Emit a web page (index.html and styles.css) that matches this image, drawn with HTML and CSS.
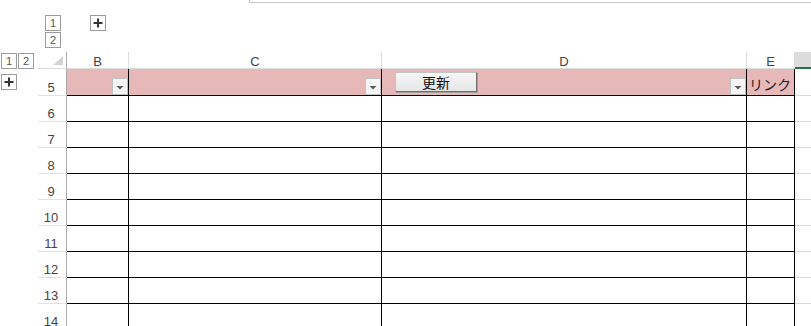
FILE: index.html
```html
<!DOCTYPE html>
<html lang="ja">
<head>
<meta charset="utf-8">
<link rel="stylesheet" href="styles.css">
</head>
<body>
<div class="formula-edge"></div>
<div class="sheet">
  <!-- outline level area -->
  <div class="blank"></div>
  <div class="col-levels"><span class="lvl">1</span><span class="lvl">2</span></div>
  <div class="col-plus"><span class="lvl"><svg width="14" height="14" viewBox="0 0 14 14"><path d="M7 2.5v9M2.5 7h9" stroke="#333" stroke-width="2"/></svg></span></div>
  <div class="top-rest"></div>

  <!-- column headers -->
  <div class="row-levels"><span class="lvl">1</span><span class="lvl">2</span></div>
  <div class="corner"><svg width="10" height="9" viewBox="0 0 10 9"><polygon points="10,0 10,9 0,9" fill="#d4d4d4"/></svg></div>
  <div class="colhead">B</div>
  <div class="colhead">C</div>
  <div class="colhead">D</div>
  <div class="colhead">E</div>
  <div class="colhead sel"></div>

  <!-- row 5 -->
  <div class="row-plus"><span class="lvl"><svg width="14" height="14" viewBox="0 0 14 14"><path d="M7 2.5v9M2.5 7h9" stroke="#333" stroke-width="2"/></svg></span></div>
  <div class="rowhead">5</div>
  <div class="cell hdr filt"><span class="dd"><svg width="14" height="15" viewBox="0 0 14 15"><polygon points="3.5,7 10.5,7 7,10.5" fill="#5a5a5a"/></svg></span></div>
  <div class="cell hdr filt"><span class="dd"><svg width="14" height="15" viewBox="0 0 14 15"><polygon points="3.5,7 10.5,7 7,10.5" fill="#5a5a5a"/></svg></span></div>
  <div class="cell hdr filt split"><button class="btn">更新</button><span class="dd"><svg width="14" height="15" viewBox="0 0 14 15"><polygon points="3.5,7 10.5,7 7,10.5" fill="#5a5a5a"/></svg></span></div>
  <div class="cell hdr txt">リンク</div>
  <div class="out"></div>

  <div class="blank"></div><div class="rowhead">6</div><div class="cell"></div><div class="cell"></div><div class="cell"></div><div class="cell"></div><div class="out"></div>
  <div class="blank"></div><div class="rowhead">7</div><div class="cell"></div><div class="cell"></div><div class="cell"></div><div class="cell"></div><div class="out"></div>
  <div class="blank"></div><div class="rowhead">8</div><div class="cell"></div><div class="cell"></div><div class="cell"></div><div class="cell"></div><div class="out"></div>
  <div class="blank"></div><div class="rowhead">9</div><div class="cell"></div><div class="cell"></div><div class="cell"></div><div class="cell"></div><div class="out"></div>
  <div class="blank"></div><div class="rowhead">10</div><div class="cell"></div><div class="cell"></div><div class="cell"></div><div class="cell"></div><div class="out"></div>
  <div class="blank"></div><div class="rowhead">11</div><div class="cell"></div><div class="cell"></div><div class="cell"></div><div class="cell"></div><div class="out"></div>
  <div class="blank"></div><div class="rowhead">12</div><div class="cell"></div><div class="cell"></div><div class="cell"></div><div class="cell"></div><div class="out"></div>
  <div class="blank"></div><div class="rowhead">13</div><div class="cell"></div><div class="cell"></div><div class="cell"></div><div class="cell"></div><div class="out"></div>
  <div class="blank"></div><div class="rowhead">14</div><div class="cell"></div><div class="cell"></div><div class="cell"></div><div class="cell"></div><div class="out"></div>
</div>
</body>
</html>
```

FILE: styles.css
```css
html, body {
  margin: 0;
  padding: 0;
  background: #ffffff;
  overflow: hidden;
  height: 326px;
}

body {
  font-family: "Liberation Sans", "Noto Sans CJK JP", sans-serif;
  color: #444444;
}

.formula-edge {
  margin-left: 249px;
  height: 2px;
  border-left: 1px solid #c8c8c8;
  border-bottom: 1px solid #c8c8c8;
}

.sheet {
  display: grid;
  grid-template-columns: 38px 29px 62px 253px 365px 48px 1fr;
  grid-template-rows: 49px 17px 27px repeat(9, 26px);
}

.lvl {
  box-sizing: border-box;
  width: 16px;
  height: 16px;
  border: 1px solid #9c9c9c;
  background: #ffffff;
  font-size: 11px;
  line-height: 14px;
  color: #555555;
  display: flex;
  align-items: center;
  justify-content: center;
}

.col-levels {
  display: flex;
  flex-direction: column;
  gap: 1px;
  padding: 12px 0 0 7px;
}

.col-plus {
  padding: 12px 0 0 23px;
}

.top-rest {
  grid-column: 4 / 8;
}

.row-levels {
  display: flex;
  gap: 1px;
  padding: 1px 0 0 1px;
}

.row-plus {
  padding: 5px 0 0 1px;
}

.corner {
  box-sizing: border-box;
  border-right: 1px solid #ababab;
  border-bottom: 1px solid #dcdcdc;
  display: flex;
  align-items: flex-end;
  justify-content: flex-end;
  padding: 0 3px 3px 0;
}

.colhead {
  box-sizing: border-box;
  border-right: 1px solid #dcdcdc;
  border-bottom: 1px solid #dcdcdc;
  font-size: 13px;
  line-height: 14px;
  text-align: center;
  padding-top: 3px;
}

.colhead.sel {
  background: #dcdcdc;
  border-right: 0;
  border-bottom: 2px solid #217346;
}

.rowhead {
  box-sizing: border-box;
  border-right: 1px solid #ababab;
  border-bottom: 1px solid #e1e1e1;
  font-size: 13px;
  line-height: 13px;
  display: flex;
  align-items: flex-end;
  justify-content: center;
  padding: 0 2px 1px 0;
}

.cell {
  box-sizing: border-box;
  border-right: 1px solid #000000;
  border-bottom: 1px solid #000000;
}

.cell.hdr {
  background: #e6b8b7;
}

.filt {
  display: flex;
  align-items: flex-end;
  justify-content: flex-end;
}

.split {
  justify-content: space-between;
}

.dd {
  box-sizing: border-box;
  width: 16px;
  height: 17px;
  border: 1px solid #c2c2c2;
  background: #f5f5f5;
  display: flex;
}

.btn {
  align-self: flex-start;
  margin: 3px 0 0 13px;
  box-sizing: border-box;
  width: 82px;
  height: 20px;
  padding: 0;
  background: linear-gradient(#f7f7f7, #e6e6e6);
  border: 1px solid #c4c4c4;
  border-right-color: #6f6f6f;
  border-bottom-color: #6f6f6f;
  box-shadow: 1px 1px 0 #a0a0a0;
  font-family: "Noto Sans CJK JP", sans-serif;
  font-size: 14px;
  line-height: 18px;
  color: #111111;
}

.txt {
  font-family: "Noto Sans CJK JP", sans-serif;
  font-size: 14px;
  line-height: 16px;
  color: #222222;
  display: flex;
  align-items: flex-end;
  padding: 0 0 3px 2px;
  white-space: nowrap;
}

.out {
  box-sizing: border-box;
  border-bottom: 1px solid #d9d9d9;
}
```
